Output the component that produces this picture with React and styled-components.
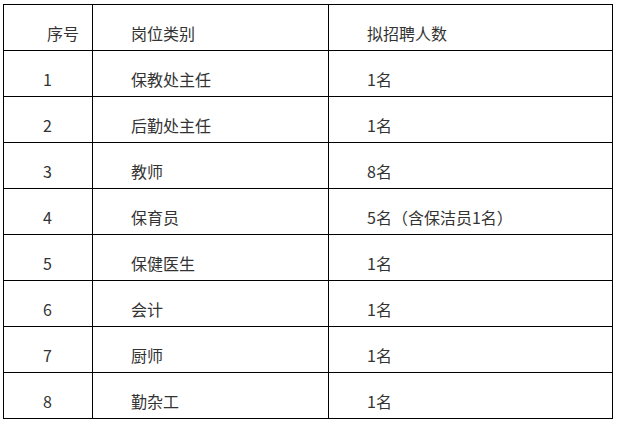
import React from "react";
import styled, { createGlobalStyle } from "styled-components";

const Global = createGlobalStyle`
  html, body { margin: 0; padding: 0; background: #fff; }
  body { font-family: "Noto Sans CJK SC", "Noto Sans", sans-serif; }
`;

const Page = styled.div`
  padding: 4px 0 0 3px;
`;

const Table = styled.div`
  display: grid;
  grid-template-columns: 89px 236px 284px;
  grid-auto-rows: 46px;
  width: 610px;
  border-left: 1px solid #000;
  border-top: 1px solid #000;
  box-sizing: border-box;
`;

const Cell = styled.div`
  box-sizing: border-box;
  border-right: 1px solid #000;
  border-bottom: 1px solid #000;
  display: flex;
  align-items: center;
  padding-top: 10px;
  padding-left: ${(p) => p.$indent}px;
  font-size: 16px;
  line-height: 22px;
  color: #333;
  white-space: nowrap;
`;

const rows = [
  ["1", "保教处主任", "1名"],
  ["2", "后勤处主任", "1名"],
  ["3", "教师", "8名"],
  ["4", "保育员", "5名（含保洁员1名）"],
  ["5", "保健医生", "1名"],
  ["6", "会计", "1名"],
  ["7", "厨师", "1名"],
  ["8", "勤杂工", "1名"],
];

export default function App() {
  return (
    <>
      <Global />
      <Page>
        <Table>
          <Cell $indent={43}>序号</Cell>
          <Cell $indent={38}>岗位类别</Cell>
          <Cell $indent={38}>拟招聘人数</Cell>
          {rows.map((r) => (
            <React.Fragment key={r[0]}>
              <Cell $indent={39}>{r[0]}</Cell>
              <Cell $indent={38}>{r[1]}</Cell>
              <Cell $indent={38}>{r[2]}</Cell>
            </React.Fragment>
          ))}
        </Table>
      </Page>
    </>
  );
}
